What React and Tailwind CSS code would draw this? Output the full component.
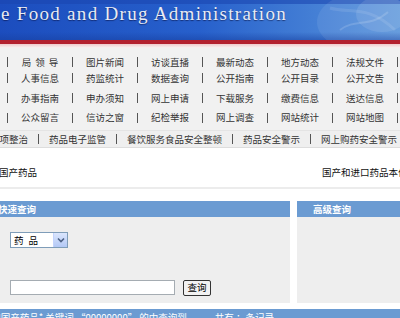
import React from 'react';

const navRows = [
  ['局 领 导', '图片新闻', '访谈直播', '最新动态', '地方动态', '法规文件'],
  ['人事信息', '药监统计', '数据查询', '公开指南', '公开目录', '公开文告'],
  ['办事指南', '申办须知', '网上申请', '下载服务', '缴费信息', '送达信息'],
  ['公众留言', '信访之窗', '纪检举报', '网上调查', '网站统计', '网站地图'],
];

const rowHeights = ['h-[16px]', 'h-[16px] mb-[2px]', 'h-[20px]', 'h-[19px]'];

const specials = ['专项整治', '药品电子监管', '餐饮服务食品安全整顿', '药品安全警示', '网上购药安全警示'];

const Sep = () => <span className="w-px h-[10px] bg-[#555] shrink-0" />;

const NavLabel = ({ text }) => {
  if (text.includes(' ')) {
    return (
      <span className="flex gap-[4px]">
        {text.split(' ').map((c, i) => (
          <span key={i}>{c}</span>
        ))}
      </span>
    );
  }
  return <span>{text}</span>;
};

export default function App() {
  return (
    <div className="w-[400px] h-[318px] overflow-hidden bg-white font-['Noto_Sans_CJK_SC',sans-serif] text-[9.5px] text-[#333]">
      {/* Banner */}
      <div className="relative h-[40px] overflow-hidden bg-gradient-to-r from-[#1c4dbe] via-[#2760cc] to-[#5b95db]">
        <div className="absolute inset-x-0 top-0 h-[4px] bg-[#1a46b0]/60" />
        <div className="absolute inset-x-0 bottom-0 h-[8px] bg-gradient-to-b from-transparent to-[#173f9f]/50" />
        <svg className="absolute right-0 top-0" width="130" height="40" viewBox="0 0 130 40">
          <ellipse cx="95" cy="22" rx="48" ry="30" fill="#ffffff" opacity="0.08" />
          <ellipse cx="112" cy="14" rx="26" ry="18" fill="#ffffff" opacity="0.1" />
          <path d="M70 30 C 85 18, 100 28, 118 12" stroke="#ffffff" strokeOpacity="0.15" fill="none" strokeWidth="2" />
          <path d="M60 8 C 80 14, 98 4, 125 30" stroke="#ffffff" strokeOpacity="0.1" fill="none" strokeWidth="3" />
        </svg>
        <div className="relative pl-[1px] pt-[4px] leading-[19px] text-[19px] tracking-[1.3px] text-[#e9ecf4] font-['Liberation_Serif',serif] whitespace-nowrap [text-shadow:0_1px_1px_rgba(0,0,40,0.5)]">
          e Food and Drug Administration
        </div>
      </div>
      <div className="h-[4px] bg-[#b3202e]" />
      <div className="h-[4px] bg-gradient-to-b from-[#efc9cb] to-[#f7f3f3]" />

      {/* Navigation */}
      <div className="bg-[#f1f1f1] pt-[6px]">
        {navRows.map((row, r) => (
          <div key={r} className={`flex items-center ml-[7px] ${rowHeights[r]}`}>
            {row.map((item) => (
              <React.Fragment key={item}>
                <Sep />
                <span className="w-[64px] flex justify-center whitespace-nowrap">
                  <NavLabel text={item} />
                </span>
              </React.Fragment>
            ))}
            <Sep />
          </div>
        ))}
        <div className="h-[3px]" />
        <div className="h-[17px] flex items-center gap-[10px] ml-[-10px] whitespace-nowrap bg-[#efefef] border-t border-[#e4e4e4]">
          {specials.map((s, i) => (
            <React.Fragment key={s}>
              {i > 0 && <Sep />}
              <span>{s}</span>
            </React.Fragment>
          ))}
        </div>
        <div className="h-px bg-[#dddddd]" />
      </div>

      {/* Category row */}
      <div className="h-[39px] pt-[16px]">
        <div className="h-[16px] flex items-center justify-between whitespace-nowrap text-[#111]">
          <span className="ml-[-1px]">国产药品</span>
          <span className="w-[78px] overflow-hidden">国产和进口药品本位码</span>
        </div>
      </div>
      <div className="h-[2px] bg-[#ececec]" />
      <div className="h-[12px]" />

      {/* Query panels */}
      <div className="flex gap-[7px]">
        <div className="w-[290px] flex flex-col">
          <div className="h-[16px] bg-[#6b9bd2] flex items-center text-white font-bold">
            <span className="ml-[-2px]">快速查询</span>
          </div>
          <div className="h-[86px] bg-[#eeeeee] pl-[10px] pt-[15px]">
            <div className="w-[58px] h-[16px] flex items-center border border-[#7f9db9] bg-white">
              <span className="flex-1 flex gap-[5px] pl-[3px] text-[#000]">
                <span>药</span>
                <span>品</span>
              </span>
              <span className="w-[14px] h-[14px] flex items-center justify-center bg-gradient-to-b from-[#dbe6fd] to-[#b3c8f5] border-l border-[#c3d3fd]">
                <svg width="8" height="6" viewBox="0 0 8 6">
                  <path d="M1 1.5 L4 4.5 L7 1.5" stroke="#4d6185" strokeWidth="1.6" fill="none" />
                </svg>
              </span>
            </div>
            <div className="flex items-start gap-[8px] mt-[32px]">
              <div className="w-[165px] h-[15px] border border-[#a5acb2] bg-white" />
              <button className="w-[28px] h-[16px] flex items-center justify-center border border-[#333] rounded-[2px] bg-[#f2f2f2] text-[#000] leading-none">
                查询
              </button>
            </div>
          </div>
        </div>
        <div className="flex-1 flex flex-col">
          <div className="h-[16px] bg-[#6b9bd2] flex items-center text-white font-bold pl-[16px]">
            高级查询
          </div>
          <div className="h-[86px] bg-[#eeeeee]" />
        </div>
      </div>

      <div className="h-[6px]" />
      <div className="h-[16px] bg-[#6b9bd2] text-white whitespace-nowrap pt-[1px] leading-[14px]">
        <span className="ml-[-2px]">I国产药品* 关键词 “00000000” 的中查询到</span>
        <span className="ml-[28px]">共有 ：条记录</span>
      </div>
    </div>
  );
}
